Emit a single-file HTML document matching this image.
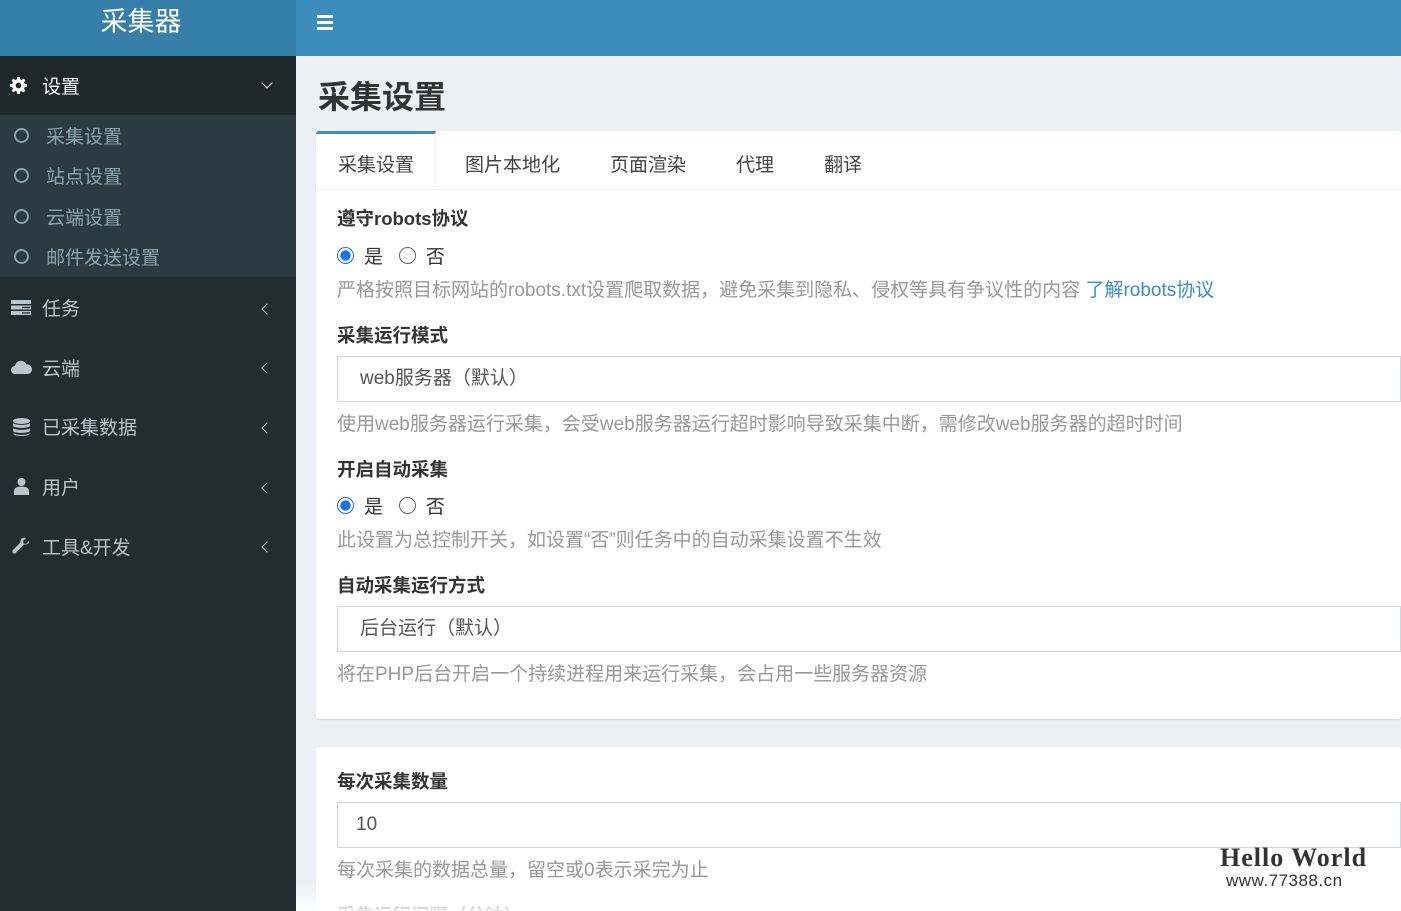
<!DOCTYPE html>
<html style="overflow:hidden;height:911px"><head><meta charset="utf-8"><style>
*{box-sizing:border-box;margin:0;padding:0}
body{width:1401px;height:911px;overflow:hidden;background:#ecf0f5;font-family:"Liberation Sans","Noto Sans CJK SC",sans-serif;position:relative}
.hl{position:absolute;left:0;top:0;width:296px;height:56px;background:#367fa9;color:#fff;font-size:27px;text-align:center;line-height:44px;padding-right:14px}
.hr{position:absolute;left:296px;top:0;right:0;height:56px;background:#3c8dbc}
.sb{position:absolute;left:0;top:56px;width:296px;bottom:0;background:#222d32}
.act{height:59px;background:#1e282c;color:#fff;font-size:19px;display:flex;align-items:center;position:relative}
.sub{background:#2c3b41;height:162px}
.sub div{height:40.5px;display:flex;align-items:center;color:#8aa4af;font-size:19px}
.sub div i{width:15px;height:15px;border:2.5px solid #8aa4af;border-radius:50%;margin:0 17px 0 14px}
.mi{height:59.6px;display:flex;align-items:center;color:#b8c7ce;font-size:19px;position:relative}
.ic{width:42px;display:flex;justify-content:center}
.ar{position:absolute;left:263px;top:50%;margin-top:-3px;width:8px;height:8px;border-left:1.6px solid #b8c7ce;border-bottom:1.6px solid #b8c7ce;transform:rotate(45deg)}
h1{position:absolute;left:318px;top:72px;font-size:32px;color:#333;font-weight:bold}
.box{position:absolute;left:316px;right:0;background:#fff;border-radius:3px;box-shadow:0 1px 1px rgba(0,0,0,.1);overflow:hidden}
.tabs{height:59px;border-bottom:1px solid #f0f0f0;display:flex;font-size:19px;color:#444}
.tabs div{padding:0 25px;line-height:70px}
.tabs .on{border-top:3px solid #3c8dbc;border-right:1px solid #f0f0f0;line-height:64px;padding:0 21px 0 22px}
.tabs .n1{padding-left:29px}
.lb{position:absolute;left:21px;font-size:18.5px;font-weight:bold;color:#333}
.hp{position:absolute;left:21px;font-size:19px;color:#999}
.inp{position:absolute;left:21px;right:0;height:46px;border:1px solid #d2d6de;font-size:19px;color:#555;line-height:44px;padding-left:22px}
.rd{position:absolute;left:21px;font-size:19px;color:#333;display:flex;align-items:center}
.rd i{width:17px;height:17px;border-radius:50%;border:1.5px solid #666;display:inline-block;margin-right:10px}
.rd i.c{border:1.5px solid #1a73e8;background:radial-gradient(circle,#1a73e8 45%,#fff 52%)}
.fade{position:absolute;left:296px;right:0;top:880px;bottom:0;background:linear-gradient(rgba(255,255,255,0),rgba(255,255,255,.9))}
</style></head><body>
<div class="hl">采集器</div>
<div class="hr"><div style="position:absolute;left:21px;top:15px;width:16px"><div style="height:3px;background:#fff;margin-bottom:3px"></div><div style="height:3px;background:#fff;margin-bottom:3px"></div><div style="height:3px;background:#fff"></div></div></div>
<div class="sb">
<div class="act"><span class="ic" style="width:36px"><svg width="17" height="17" viewBox="0 0 16 16"><path fill="#fff" d="M6.8 0h2.4l.4 2.2 1.3.6 1.9-1.3 1.7 1.7-1.3 1.9.6 1.3 2.2.4v2.4l-2.2.4-.6 1.3 1.3 1.9-1.7 1.7-1.9-1.3-1.3.6-.4 2.2H6.8l-.4-2.2-1.3-.6-1.9 1.3-1.7-1.7 1.3-1.9-.6-1.3L0 9.2V6.8l2.2-.4.6-1.3-1.3-1.9 1.7-1.7 1.9 1.3 1.3-.6zM8 5.3A2.7 2.7 0 108 10.7 2.7 2.7 0 108 5.3z"/></svg></span><span style="margin-left:6px">设置</span><span class="ar" style="border-color:#fff;transform:rotate(-45deg);margin-top:-7px"></span></div>
<div class="sub"><div><i></i>采集设置</div><div><i></i>站点设置</div><div><i></i>云端设置</div><div><i></i>邮件发送设置</div></div>
<div style="height:1px"></div>
<div class="mi"><span class="ic"><svg width="20" height="15" viewBox="0 0 20 15"><rect y="0" width="20" height="4" fill="#b8c7ce"/><rect y="5.5" width="20" height="4" fill="#b8c7ce"/><rect y="11" width="20" height="4" fill="#b8c7ce"/><rect x="11" y="6.8" width="8" height="1.3" fill="#222d32"/><rect x="11" y="12.3" width="8" height="1.3" fill="#222d32"/></svg></span>任务<span class="ar"></span></div>
<div class="mi"><span class="ic"><svg width="21" height="14" viewBox="0 0 21 14"><path fill="#b8c7ce" d="M4 14A4 4 0 014 6a6 6 0 0111.5-1.5A4.7 4.7 0 0117 14z"/></svg></span>云端<span class="ar"></span></div>
<div class="mi"><span class="ic"><svg width="17" height="18" viewBox="0 0 17 18"><ellipse cx="8.5" cy="3" rx="8.5" ry="3" fill="#b8c7ce"/><path fill="#b8c7ce" d="M0 5c2 2.5 15 2.5 17 0v3c-2 2.5-15 2.5-17 0zM0 10c2 2.5 15 2.5 17 0v3c-2 2.5-15 2.5-17 0zM0 15c2 2.5 15 2.5 17 0v0c0 2-4 3-8.5 3S0 17 0 15z"/></svg></span>已采集数据<span class="ar"></span></div>
<div class="mi"><span class="ic"><svg width="15" height="17" viewBox="0 0 15 17"><circle cx="7.5" cy="4" r="4" fill="#b8c7ce"/><path fill="#b8c7ce" d="M0 17v-4c0-3 3-4.5 7.5-4.5S15 10 15 13v4z"/></svg></span>用户<span class="ar"></span></div>
<div class="mi"><span class="ic"><svg width="18" height="18" viewBox="0 0 18 18"><path fill="#b8c7ce" d="M17 4l-3 3-2.5-.5L11 4l3-3c-3-1-6 1-5.5 4.5L1 13c-1 1-1 3 1 3.5s2-1 2.5-1.5l7.5-7.5C15 8 18 6 17 4z"/></svg></span>工具&amp;开发<span class="ar"></span></div>
</div>
<h1>采集设置</h1>
<div class="box" style="top:131px;height:588px">
<div class="tabs"><div class="on">采集设置</div><div class="n1">图片本地化</div><div>页面渲染</div><div>代理</div><div>翻译</div></div>
<div class="lb" style="top:74px">遵守robots协议</div>
<div class="rd" style="top:111px"><i class="c"></i>是&nbsp;&nbsp;&nbsp;<i></i>否</div>
<div class="hp" style="top:144px">严格按照目标网站的robots.txt设置爬取数据，避免采集到隐私、侵权等具有争议性的内容 <span style="color:#3c8dbc">了解robots协议</span></div>
<div class="lb" style="top:191px">采集运行模式</div>
<div class="inp" style="top:225px">web服务器（默认）</div>
<div class="hp" style="top:278px">使用web服务器运行采集，会受web服务器运行超时影响导致采集中断，需修改web服务器的超时时间</div>
<div class="lb" style="top:325px">开启自动采集</div>
<div class="rd" style="top:361px"><i class="c"></i>是&nbsp;&nbsp;&nbsp;<i></i>否</div>
<div class="hp" style="top:394px">此设置为总控制开关，如设置“否”则任务中的自动采集设置不生效</div>
<div class="lb" style="top:441px">自动采集运行方式</div>
<div class="inp" style="top:475px">后台运行（默认）</div>
<div class="hp" style="top:528px">将在PHP后台开启一个持续进程用来运行采集，会占用一些服务器资源</div>
</div>
<div class="box" style="top:747px;height:164px">
<div class="lb" style="top:21px">每次采集数量</div>
<div class="inp" style="top:55px;padding-left:18px">10</div>
<div class="hp" style="top:108px">每次采集的数据总量，留空或0表示采完为止</div>
<div class="lb" style="top:155px">采集运行间隔（分钟）</div>
</div>
<div class="fade"></div>
<div style="position:absolute;left:1220px;top:843px;font-family:'Liberation Serif',serif;font-weight:bold;font-size:26px;color:#333;letter-spacing:1px">Hello World</div>
<div style="position:absolute;left:1226px;top:871px;font-size:17px;color:#333;letter-spacing:.5px">www.77388.cn</div>
</body></html>
